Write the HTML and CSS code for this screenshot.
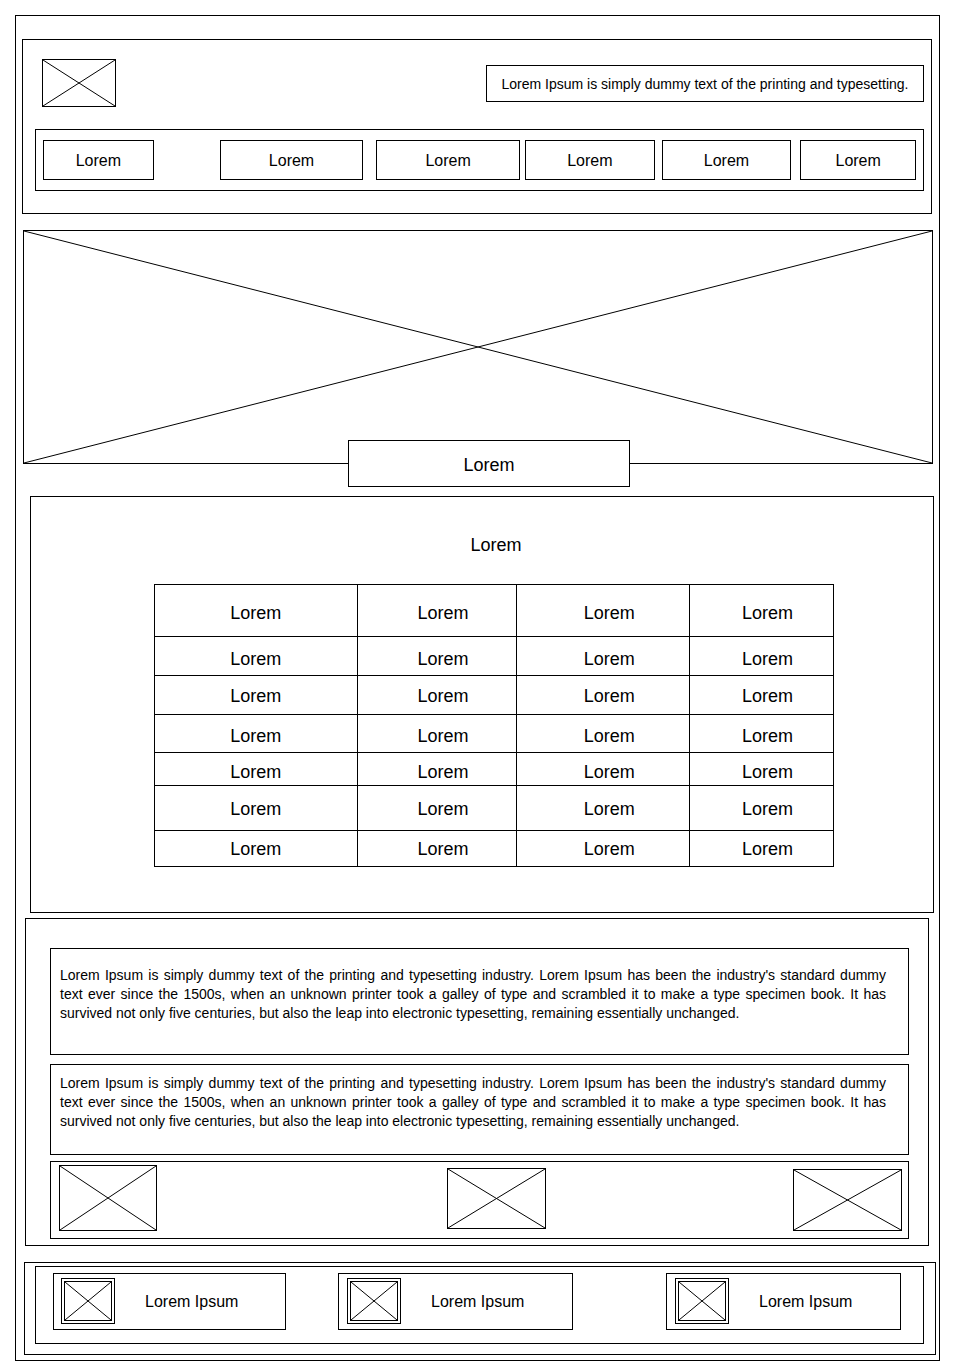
FILE: index.html
```html
<!DOCTYPE html>
<html lang="en">
  <head>
    <meta charset="UTF-8" />
    <meta name="viewport" content="width=device-width, initial-scale=1.0" />
    <title>Wireframe</title>
    <link rel="stylesheet" href="styles.css">
  </head>
  <body>
    <div class="frame">
      <div class="header">
        <div class="top-row">
          <div class="ph logo">
            <svg viewBox="0 0 100 100" preserveAspectRatio="none"><line x1="0" y1="0" x2="100" y2="100" /><line x1="100" y1="0" x2="0" y2="100" /></svg>
          </div>
          <div class="slogan">Lorem Ipsum is simply dummy text of the printing and typesetting.</div>
        </div>
        <div class="nav">
          <div class="nav-item n1">Lorem</div>
          <div class="nav-item n2">Lorem</div>
          <div class="nav-item n3">Lorem</div>
          <div class="nav-item n4">Lorem</div>
          <div class="nav-item n5">Lorem</div>
          <div class="nav-item n6">Lorem</div>
        </div>
      </div>

      <div class="ph hero">
        <svg viewBox="0 0 100 100" preserveAspectRatio="none"><line x1="0" y1="0" x2="100" y2="100" /><line x1="100" y1="0" x2="0" y2="100" /></svg>
      </div>
      <div class="hero-btn">Lorem</div>

      <div class="section">
        <div class="section-title">Lorem</div>
        <table class="grid">
          <tr class="r1"><td>Lorem</td><td>Lorem</td><td>Lorem</td><td>Lorem</td></tr>
          <tr class="r2"><td>Lorem</td><td>Lorem</td><td>Lorem</td><td>Lorem</td></tr>
          <tr class="r3"><td>Lorem</td><td>Lorem</td><td>Lorem</td><td>Lorem</td></tr>
          <tr class="r4"><td>Lorem</td><td>Lorem</td><td>Lorem</td><td>Lorem</td></tr>
          <tr class="r5"><td>Lorem</td><td>Lorem</td><td>Lorem</td><td>Lorem</td></tr>
          <tr class="r6"><td>Lorem</td><td>Lorem</td><td>Lorem</td><td>Lorem</td></tr>
          <tr class="r7"><td>Lorem</td><td>Lorem</td><td>Lorem</td><td>Lorem</td></tr>
        </table>
      </div>

      <div class="content">
        <div class="para p1">
          Lorem Ipsum is simply dummy text of the printing and typesetting industry. Lorem Ipsum has been the industry's standard dummy text ever since the 1500s, when an unknown printer took a galley of type and scrambled it to make a type specimen book. It has survived not only five centuries, but also the leap into electronic typesetting, remaining essentially unchanged.
        </div>
        <div class="para p2">
          Lorem Ipsum is simply dummy text of the printing and typesetting industry. Lorem Ipsum has been the industry's standard dummy text ever since the 1500s, when an unknown printer took a galley of type and scrambled it to make a type specimen book. It has survived not only five centuries, but also the leap into electronic typesetting, remaining essentially unchanged.
        </div>
        <div class="gallery">
          <div class="ph g1">
            <svg viewBox="0 0 100 100" preserveAspectRatio="none"><line x1="0" y1="0" x2="100" y2="100" /><line x1="100" y1="0" x2="0" y2="100" /></svg>
          </div>
          <div class="ph g2">
            <svg viewBox="0 0 100 100" preserveAspectRatio="none"><line x1="0" y1="0" x2="100" y2="100" /><line x1="100" y1="0" x2="0" y2="100" /></svg>
          </div>
          <div class="ph g3">
            <svg viewBox="0 0 100 100" preserveAspectRatio="none"><line x1="0" y1="0" x2="100" y2="100" /><line x1="100" y1="0" x2="0" y2="100" /></svg>
          </div>
        </div>
      </div>

      <div class="footer">
        <div class="footer-inner">
          <div class="card c1">
            <div class="icon"><div class="ph icon-in">
              <svg viewBox="0 0 100 100" preserveAspectRatio="none"><line x1="0" y1="0" x2="100" y2="100" /><line x1="100" y1="0" x2="0" y2="100" /></svg>
            </div></div>
            <span>Lorem Ipsum</span>
          </div>
          <div class="card c2">
            <div class="icon"><div class="ph icon-in">
              <svg viewBox="0 0 100 100" preserveAspectRatio="none"><line x1="0" y1="0" x2="100" y2="100" /><line x1="100" y1="0" x2="0" y2="100" /></svg>
            </div></div>
            <span>Lorem Ipsum</span>
          </div>
          <div class="card c3">
            <div class="icon"><div class="ph icon-in">
              <svg viewBox="0 0 100 100" preserveAspectRatio="none"><line x1="0" y1="0" x2="100" y2="100" /><line x1="100" y1="0" x2="0" y2="100" /></svg>
            </div></div>
            <span>Lorem Ipsum</span>
          </div>
        </div>
      </div>
    </div>
  </body>
</html>
```

FILE: styles.css
```css
* {
  box-sizing: border-box;
}
body {
  margin: 0;
  background: #fff;
  color: #000;
  font-family: "Liberation Sans", Arial, sans-serif;
}
.frame {
  margin: 15px;
  width: 925px;
  height: 1346px;
  border: 1px solid #000;
  padding: 23px 0 0 6px;
}

/* placeholder boxes with a cross */
.ph {
  border: 1px solid #000;
  background: #fff;
}
.ph svg {
  display: block;
  width: 100%;
  height: 100%;
}
.ph line {
  stroke: #000;
  stroke-width: 1;
  vector-effect: non-scaling-stroke;
}

/* header */
.header {
  width: 910px;
  border: 1px solid #000;
  padding: 19px 7px 22px 12px;
}
.top-row {
  display: flex;
  justify-content: space-between;
  align-items: flex-start;
}
.logo {
  width: 74px;
  height: 48px;
  margin-left: 7px;
}
.slogan {
  width: 438px;
  height: 37px;
  margin-top: 6px;
  border: 1px solid #000;
  font-size: 14px;
  display: flex;
  align-items: center;
  justify-content: center;
}
.nav {
  margin-top: 22px;
  height: 62px;
  border: 1px solid #000;
  padding: 10px 7px;
  display: flex;
}
.nav-item {
  height: 40px;
  border: 1px solid #000;
  font-size: 16px;
  padding-top: 2px;
  display: flex;
  align-items: center;
  justify-content: center;
}
.n1 { width: 111px; }
.n2 { width: 144px; margin-left: 66px; }
.n3 { width: 144px; margin-left: 13px; }
.n4 { width: 130px; margin-left: 5px; }
.n5 { width: 130px; margin-left: 7px; }
.n6 { width: 116px; margin-left: 9px; }

/* hero */
.hero {
  width: 910px;
  height: 234px;
  margin: 16px 0 0 1px;
}
.hero-btn {
  position: relative;
  width: 282px;
  height: 47px;
  margin: -24px 0 0 326px;
  border: 1px solid #000;
  background: #fff;
  font-size: 18px;
  padding-top: 3px;
  display: flex;
  align-items: center;
  justify-content: center;
}

/* table section */
.section {
  width: 904px;
  height: 417px;
  margin: 9px 0 0 8px;
  border: 1px solid #000;
  padding-top: 38px;
}
.section-title {
  font-size: 18px;
  line-height: 21px;
  text-align: center;
  padding-left: 28px;
  margin-bottom: 28px;
}
.grid {
  margin-left: 123px;
  width: 680px;
  border-collapse: collapse;
  border: 1px solid #000;
  font-size: 18px;
}
.grid td {
  border: 1px solid #000;
  text-align: center;
  padding: 6px 0 0 12px;
}
.grid td:nth-child(1) { width: 203px; padding-left: 0; }
.grid td:nth-child(2) { width: 160px; }
.grid td:nth-child(3) { width: 173px; }
.grid td:nth-child(4) { width: 144px; }
.r1 { height: 52px; }
.r2 { height: 39px; }
.r3 { height: 39px; }
.r4 { height: 38px; }
.r5 { height: 33px; }
.r6 { height: 45px; }
.r7 { height: 36px; }
.r3 td, .r6 td, .r7 td {
  padding-top: 2px;
}

/* text section */
.content {
  width: 904px;
  height: 328px;
  margin: 5px 0 0 3px;
  border: 1px solid #000;
  padding: 29px 19px 6px 24px;
}
.para {
  border: 1px solid #000;
  font-size: 14px;
  line-height: 19px;
  text-align: justify;
  padding: 0 22px 0 9px;
}
.p1 { height: 107px; padding-top: 17px; }
.p2 { height: 91px; margin-top: 9px; padding-top: 9px; }
.gallery {
  height: 78px;
  margin-top: 6px;
  border: 1px solid #000;
  padding: 0 6px 0 8px;
  display: flex;
  align-items: flex-start;
}
.g1 { width: 98px; height: 66px; margin-top: 3px; }
.g2 { width: 99px; height: 61px; margin: 6px 0 0 290px; }
.g3 { width: 109px; height: 62px; margin: 7px 0 0 auto; }

/* footer */
.footer {
  width: 912px;
  height: 93px;
  margin: 16px 0 0 2px;
  border: 1px solid #000;
  padding: 3px 11px 0 10px;
}
.footer-inner {
  height: 78px;
  border: 1px solid #000;
  padding: 6px 0 0 17px;
  display: flex;
  align-items: flex-start;
}
.card {
  width: 233px;
  height: 57px;
  border: 1px solid #000;
  padding: 4px 0 0 7px;
  display: flex;
  align-items: flex-start;
  font-size: 16px;
}
.c2 { margin-left: 52px; width: 235px; }
.c3 { margin-left: 93px; width: 235px; }
.c3 .icon, .c2 .icon { margin-left: 1px; }
.icon {
  width: 54px;
  height: 46px;
  border: 1px solid #000;
  padding: 2px;
}
.icon-in {
  width: 100%;
  height: 100%;
}
.card span {
  margin: 15px 0 0 30px;
}
```
